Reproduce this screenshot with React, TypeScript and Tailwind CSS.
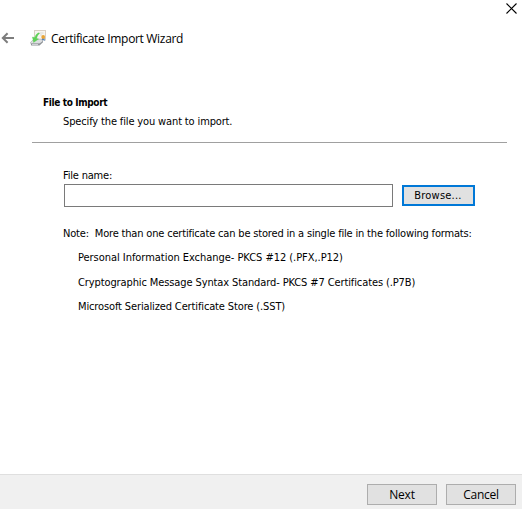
import React from 'react';

const formats = [
    { label: 'Personal Information Exchange- PKCS #12 (.PFX,.P12)', spacing: 'tracking-[-0.04px]' },
    { label: 'Cryptographic Message Syntax Standard- PKCS #7 Certificates (.P7B)', spacing: 'tracking-[-0.11px]' },
    { label: 'Microsoft Serialized Certificate Store (.SST)', spacing: 'tracking-[-0.13px]' },
];

const BackIcon = () => (
    <svg width="14" height="12" viewBox="0 0 14 12" fill="none" stroke="#7d7d7d" strokeWidth="2">
        <path d="M13 6H2M6.6 1.2L1.8 6l4.8 4.8" />
    </svg>
);

const CloseIcon = () => (
    <svg width="11" height="11" viewBox="0 0 11 11" fill="none" stroke="#000" strokeWidth="1.1">
        <path d="M0.5 0.5l10 10M10.5 0.5l-10 10" />
    </svg>
);

const CertificateIcon = () => (
    <svg width="17" height="16" viewBox="0 0 17 16">
        {/* certificate */}
        <rect x="4.5" y="0.5" width="11" height="9.5" fill="#f7f5f0" stroke="#d9cfc4" />
        <path d="M9 3h4.5M10 5h2" stroke="#d4d4cf" strokeWidth="0.8" />
        <path d="M12 8l-.3 3 1.6-.9 1.5.9-.3-3z" fill="#4d84c8" />
        <circle cx="13.2" cy="7" r="1.9" fill="#e9a436" />
        {/* drive */}
        <path d="M0.5 12.3l3.5-3.1h7l2 1.8-2.8 2.6H1z" fill="#dcdee0" stroke="#a4a8ac" strokeWidth="0.6" />
        <path d="M0.5 12.6l.7 3h8.3l3.5-3.4v-1.1l-3.4 2.5H1z" fill="#8f9397" />
        <path d="M2 14.5h6" stroke="#dfe1e3" strokeWidth="0.8" />
        {/* import arrow */}
        <path d="M8.6 2.8C6.8 3.6 5.6 5.2 4.9 7.4L2.4 7l1.2 5.4L8.6 9l-1.9-.6c.3-2 1.1-3.7 2.9-4.9z" fill="#5fd257" stroke="#55c44e" strokeWidth="0.3" />
    </svg>
);

const App = () => {
    return (
        <div className="flex h-[509px] w-[522px] flex-col overflow-hidden bg-white font-['DejaVu_Sans_Condensed','DejaVu_Sans',sans-serif] text-[11px] leading-[14px] text-black">
            <div className="flex h-[22px] shrink-0 justify-end pt-[3px] pr-[5px]">
                <button aria-label="Close" className="h-[11px]">
                    <CloseIcon />
                </button>
            </div>

            <header className="flex h-8 shrink-0 items-center pl-[1px]">
                <BackIcon />
                <div className="ml-[15px]">
                    <CertificateIcon />
                </div>
                <h1 className="ml-1 pt-[2px] font-['Open_Sans',sans-serif] text-[12px] leading-4 tracking-[-0.32px] whitespace-nowrap">
                    Certificate Import Wizard
                </h1>
            </header>

            <main className="flex-1 pt-[42px] pr-[15px] pl-8">
                <div className="h-[47px] border-b border-[#a0a0a0] pl-[11px]">
                    <h2 className="text-[10px] font-bold tracking-[-0.36px] whitespace-nowrap">File to Import</h2>
                    <p className="mt-[5px] pl-5 tracking-[-0.14px] whitespace-nowrap">Specify the file you want to import.</p>
                </div>

                <div className="pt-[26px] pl-8">
                    <label htmlFor="file-name" className="-ml-px block h-[15px] tracking-[-0.2px] whitespace-nowrap">
                        File name:
                    </label>
                    <div className="flex items-center gap-[9px]">
                        <input id="file-name" className="h-[23px] w-[329px] border border-[#7a7a7a] bg-white px-1 outline-none" />
                        <button className="h-[21px] w-[73px] border-2 border-[#0078d7] bg-[#e1e1e1] pt-px pr-px tracking-[0.22px] whitespace-nowrap">
                            Browse...
                        </button>
                    </div>

                    <p className="mt-5 -ml-px tracking-[-0.178px] whitespace-pre">
                        {'Note:  More than one certificate can be stored in a single file in the following formats:'}
                    </p>
                    <ul className="mt-[10px] flex flex-col gap-[10.5px] pl-[14px]">
                        {formats.map((format) => (
                            <li key={format.label} className={`whitespace-nowrap ${format.spacing}`}>
                                {format.label}
                            </li>
                        ))}
                    </ul>
                </div>
            </main>

            <footer className="flex h-[35px] shrink-0 justify-end gap-[9px] border-t border-[#dfdfdf] bg-[#f0f0f0] pt-[9px] pr-[6px] font-['Open_Sans',sans-serif] text-[12px] tracking-[-0.25px]">
                <button className="h-[21px] w-[70px] border border-[#adadad] bg-[#e1e1e1]">Next</button>
                <button className="h-[21px] w-[70px] border border-[#adadad] bg-[#e1e1e1]">Cancel</button>
            </footer>
        </div>
    );
};

export default App;
